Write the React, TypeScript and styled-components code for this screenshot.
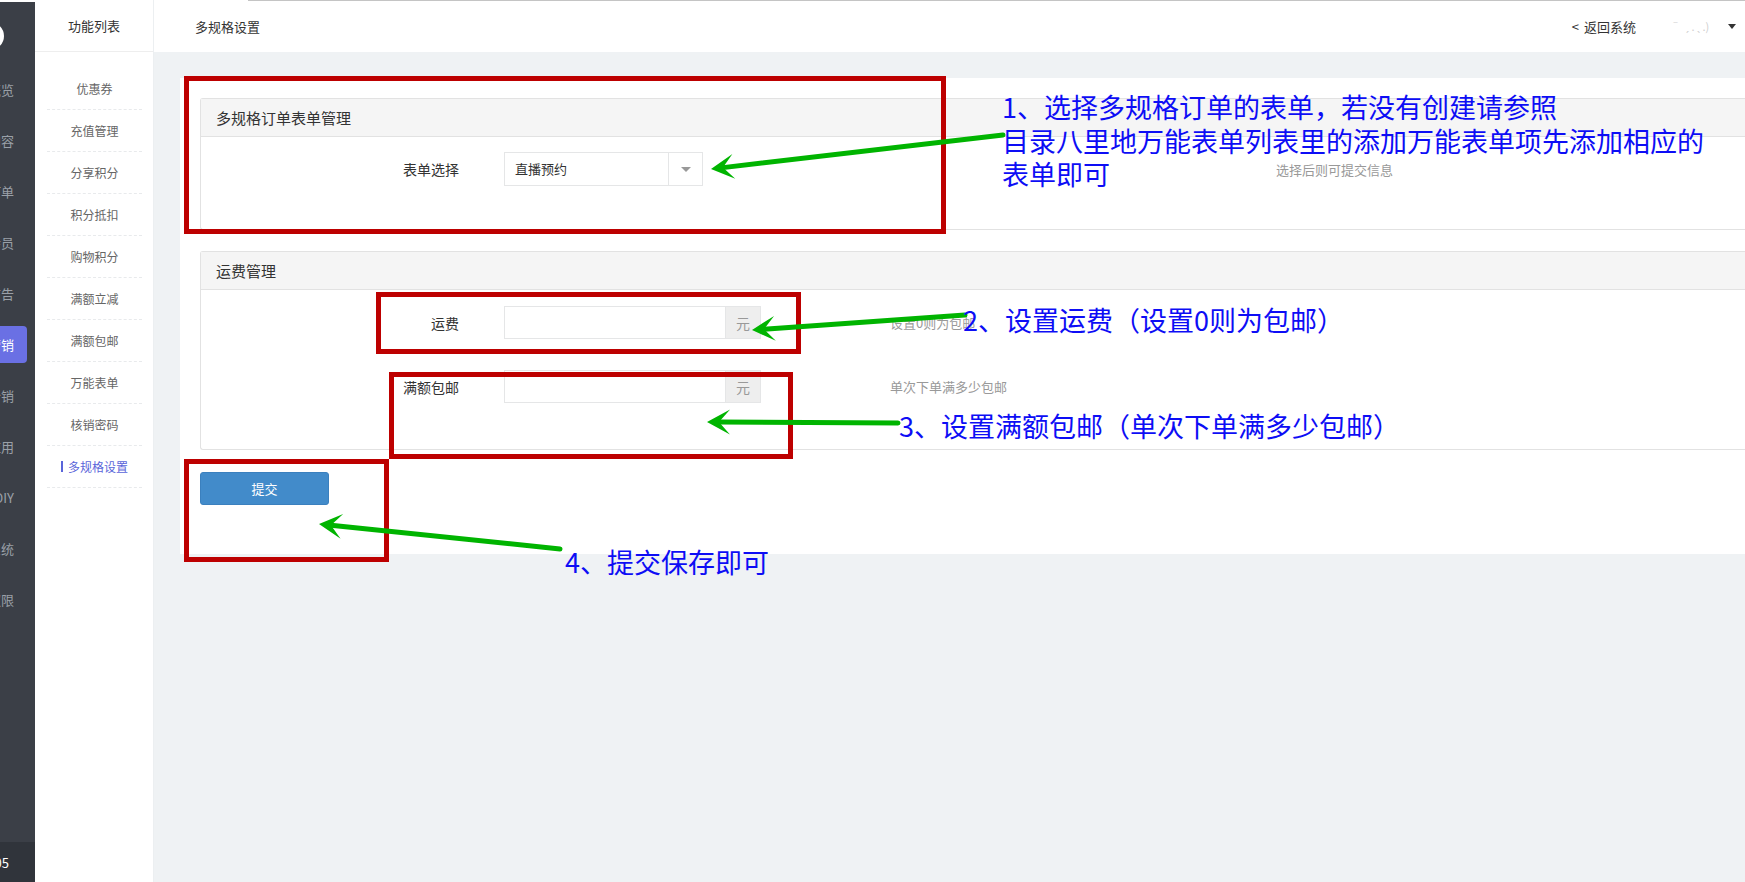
import { createGlobalStyle, styled } from "styled-components";

const GlobalStyle = createGlobalStyle`
    html, body { margin: 0; padding: 0; }
    body {
        font-family: "Noto Sans CJK SC", "Noto Sans", sans-serif;
        color: #333;
        background: #fff;
    }
    * { box-sizing: border-box; }
`;

const mainMenu = ["概览", "内容", "订单", "会员", "广告", "营销", "分销", "应用", "DIY", "系统", "权限"];
const subMenu = ["优惠券", "充值管理", "分享积分", "积分抵扣", "购物积分", "满额立减", "满额包邮", "万能表单", "核销密码", "多规格设置"];

type Arrow = { from: [number, number]; tip: [number, number] };

const arrows: Array<Arrow> = [
    { from: [1003, 135], tip: [711, 169] },
    { from: [965, 315], tip: [752, 330] },
    { from: [898, 423], tip: [707, 422] },
    { from: [560, 549], tip: [319, 524] },
];

const boxes = [
    { x: 184, y: 76, w: 762, h: 158 },
    { x: 376, y: 292, w: 425, h: 62 },
    { x: 389, y: 372, w: 404, h: 87 },
    { x: 184, y: 459, w: 205, h: 103 },
];

function arrowParts({ from, tip }: Arrow) {
    const dx = from[0] - tip[0];
    const dy = from[1] - tip[1];
    const len = Math.hypot(dx, dy);
    const ux = dx / len, uy = dy / len;
    const nx = -uy, ny = ux;
    const L = 23, W = 12.5, N = 12;
    const b1 = [tip[0] + ux * L + nx * W, tip[1] + uy * L + ny * W];
    const b2 = [tip[0] + ux * L - nx * W, tip[1] + uy * L - ny * W];
    const notch = [tip[0] + ux * N, tip[1] + uy * N];
    const head = `M${tip[0]},${tip[1]} L${b1[0]},${b1[1]} L${notch[0]},${notch[1]} L${b2[0]},${b2[1]} Z`;
    return { head, notch };
}

export default function App() {
    return (
        <Page>
            <GlobalStyle />
            <MainNav>
                <Logo><LogoMark /></Logo>
                {mainMenu.map((label) => (
                    <MainItem key={label}>
                        <MainLabel $active={label === "营销"}>{label}</MainLabel>
                    </MainItem>
                ))}
                <Version><span>v1.05</span></Version>
            </MainNav>

            <SubNav>
                <SubHeader>功能列表</SubHeader>
                <SubList>
                    {subMenu.map((label) => (
                        <SubItem key={label} $active={label === "多规格设置"}>{label}</SubItem>
                    ))}
                </SubList>
            </SubNav>

            <Main>
                <TopBar>
                    <span>多规格设置</span>
                    <TopRight>
                        <BackLink><BackArrow>&lt;</BackArrow>返回系统</BackLink>
                        <UserName>ˉ &nbsp;ˏ . ˎ .)</UserName>
                        <Caret />
                    </TopRight>
                </TopBar>

                <Content>
                    <Card>
                        <Panel>
                            <PanelHeader>多规格订单表单管理</PanelHeader>
                            <PanelBody $top={15} $bottom={43}>
                                <FormRow>
                                    <Label>表单选择</Label>
                                    <Control $w={772}>
                                        <Select>
                                            <SelectText>直播预约</SelectText>
                                            <SelectToggle><Triangle /></SelectToggle>
                                        </Select>
                                    </Control>
                                    <Help>选择后则可提交信息</Help>
                                </FormRow>
                            </PanelBody>
                        </Panel>

                        <Panel>
                            <PanelHeader>运费管理</PanelHeader>
                            <PanelBody $top={16} $bottom={46}>
                                <FormRow>
                                    <Label>运费</Label>
                                    <Control $w={386}>
                                        <InputGroup>
                                            <Input />
                                            <Addon>元</Addon>
                                        </InputGroup>
                                    </Control>
                                    <Help>设置0则为包邮</Help>
                                </FormRow>
                                <FormRow>
                                    <Label>满额包邮</Label>
                                    <Control $w={386}>
                                        <InputGroup>
                                            <Input />
                                            <Addon>元</Addon>
                                        </InputGroup>
                                    </Control>
                                    <Help>单次下单满多少包邮</Help>
                                </FormRow>
                            </PanelBody>
                        </Panel>

                        <SubmitButton>提交</SubmitButton>
                    </Card>
                </Content>
            </Main>

            <Overlay>
                {boxes.map((b, i) => (
                    <RedBox key={i} $x={b.x} $y={b.y} $w={b.w} $h={b.h} />
                ))}
                <ArrowLayer width="1745" height="882" viewBox="0 0 1745 882">
                    {arrows.map((a, i) => {
                        const { head, notch } = arrowParts(a);
                        return (
                            <g key={i}>
                                <line x1={a.from[0]} y1={a.from[1]} x2={notch[0]} y2={notch[1]}
                                    stroke="#00b400" strokeWidth="5" strokeLinecap="round" />
                                <path d={head} fill="#00b400" />
                            </g>
                        );
                    })}
                </ArrowLayer>
                <Note $x={1002} $y={90}>
                    1、选择多规格订单的表单，若没有创建请参照<br />
                    目录八里地万能表单列表里的添加万能表单项先添加相应的<br />
                    表单即可
                </Note>
                <Note $x={963} $y={303}>2、设置运费（设置0则为包邮）</Note>
                <Note $x={899} $y={409}>3、设置满额包邮（单次下单满多少包邮）</Note>
                <Note $x={565} $y={545}>4、提交保存即可</Note>
            </Overlay>
        </Page>
    );
}

const Page = styled.div`
    position: relative;
    display: flex;
    width: 100vw;
    height: 100vh;
    overflow: hidden;
`;

const MainNav = styled.nav`
    width: 35px;
    flex-shrink: 0;
    background: #3b3f47;
    display: flex;
    flex-direction: column;
    overflow: hidden;
`;

const Logo = styled.div`
    height: 64px;
    border-top: 2px solid #fff;
    padding-top: 20px;
`;

const LogoMark = styled.div`
    width: 28px;
    height: 28px;
    margin-left: -24px;
    border-radius: 50%;
    border: 5px solid #fff;
`;

const MainItem = styled.div`
    height: 51px;
    display: flex;
    align-items: center;
    justify-content: flex-end;
    padding-right: 8px;
`;

const MainLabel = styled.span<{ $active?: boolean }>`
    height: 37px;
    line-height: 37px;
    padding: 0 13px 0 30px;
    border-radius: 0 4px 4px 0;
    white-space: nowrap;
    font-size: 13px;
    background: ${(p) => (p.$active ? "#6a70e4" : "transparent")};
    color: ${(p) => (p.$active ? "#fff" : "#9aa0a8")};
`;

const Version = styled.div`
    margin-top: auto;
    height: 40px;
    flex-shrink: 0;
    display: flex;
    align-items: center;
    justify-content: flex-end;
    background: #30343b;
    color: #fff;
    font-size: 13px;
    padding-right: 26px;
    white-space: nowrap;
`;

const SubNav = styled.aside`
    width: 119px;
    flex-shrink: 0;
    border-right: 1px solid #eceff1;
    background: #fff;
`;

const SubHeader = styled.div`
    height: 52px;
    line-height: 51px;
    border-bottom: 1px solid #eee;
    text-align: center;
    font-size: 13px;
    color: #333;
`;

const SubList = styled.ul`
    list-style: none;
    margin: 0;
    padding: 16px 11px 0 12px;
`;

const SubItem = styled.li<{ $active?: boolean }>`
    height: 42px;
    display: flex;
    align-items: center;
    justify-content: center;
    gap: 5px;
    border-bottom: 1px dashed #e8eaec;
    font-size: 12px;
    color: ${(p) => (p.$active ? "#5a65da" : "#666")};
    &::before {
        content: "";
        display: ${(p) => (p.$active ? "block" : "none")};
        width: 2px;
        height: 11px;
        background: #5a65da;
    }
`;

const Main = styled.main`
    flex: 1;
    display: flex;
    flex-direction: column;
    min-width: 0;
`;

const TopBar = styled.header`
    position: relative;
    height: 52px;
    flex-shrink: 0;
    display: flex;
    align-items: center;
    justify-content: space-between;
    padding: 0 9px 0 41px;
    font-size: 13px;
    color: #333;
    background: #fff;
    &::before {
        content: "";
        position: absolute;
        top: 0;
        left: 94px;
        right: 0;
        height: 1px;
        background: #c4c4c4;
    }
`;

const TopRight = styled.div`
    display: flex;
    align-items: center;
`;

const BackLink = styled.span`
    display: flex;
    align-items: center;
    font-size: 13px;
    color: #333;
    margin-right: 34px;
`;

const BackArrow = styled.span`
    margin-right: 5px;
`;

const UserName = styled.span`
    font-size: 11px;
    color: #cfcfcf;
    width: 58px;
    white-space: nowrap;
`;

const Caret = styled.span`
    width: 0;
    height: 0;
    border-left: 4px solid transparent;
    border-right: 4px solid transparent;
    border-top: 5px solid #333;
`;

const Content = styled.div`
    flex: 1;
    background: #eff2f4;
    padding: 26px 0 0 26px;
`;

const Card = styled.section`
    background: #fff;
    padding: 20px 0 49px 20px;
`;

const Panel = styled.div`
    border: 1px solid #e2e2e2;
    border-right: none;
    border-radius: 3px 0 0 3px;
    margin-bottom: 21px;
    & + & { margin-bottom: 22px; }
`;

const PanelHeader = styled.div`
    height: 38px;
    line-height: 37px;
    padding-left: 15px;
    background: #f5f5f5;
    border-bottom: 1px solid #e2e2e2;
    font-size: 15px;
    color: #333;
`;

const PanelBody = styled.div<{ $top: number; $bottom: number }>`
    display: flex;
    flex-direction: column;
    gap: 31px;
    padding: ${(p) => p.$top}px 0 ${(p) => p.$bottom}px;
`;

const FormRow = styled.div`
    display: flex;
    align-items: center;
`;

const Label = styled.label`
    width: 258px;
    text-align: right;
    font-size: 14px;
    color: #333;
`;

const Control = styled.div<{ $w: number }>`
    width: ${(p) => p.$w}px;
    margin-left: 45px;
`;

const Help = styled.span`
    font-size: 13px;
    color: #999;
`;

const Select = styled.div`
    width: 199px;
    height: 34px;
    display: flex;
    border: 1px solid #e5e6e7;
`;

const SelectText = styled.span`
    flex: 1;
    line-height: 32px;
    padding-left: 10px;
    font-size: 13px;
    color: #333;
`;

const SelectToggle = styled.span`
    width: 34px;
    display: flex;
    align-items: center;
    justify-content: center;
    border-left: 1px solid #e5e6e7;
`;

const Triangle = styled.span`
    width: 0;
    height: 0;
    border-left: 5px solid transparent;
    border-right: 5px solid transparent;
    border-top: 5px solid #999;
`;

const InputGroup = styled.div`
    width: 257px;
    height: 33px;
    display: flex;
`;

const Input = styled.input`
    flex: 1;
    min-width: 0;
    border: 1px solid #e5e6e7;
    border-right: none;
    outline: none;
    padding: 0 8px;
    font-size: 13px;
`;

const Addon = styled.span`
    width: 36px;
    display: flex;
    align-items: center;
    justify-content: center;
    background: #eee;
    border: 1px solid #e5e6e7;
    color: #999;
    font-size: 14px;
`;

const SubmitButton = styled.button`
    width: 129px;
    height: 33px;
    border: 1px solid #3b80be;
    border-radius: 3px;
    background: #428bca;
    color: #fff;
    font-family: inherit;
    font-size: 13px;
    cursor: pointer;
`;

const Overlay = styled.div`
    position: absolute;
    inset: 0;
    pointer-events: none;
`;

const ArrowLayer = styled.svg`
    position: absolute;
    left: 0;
    top: 0;
`;

const RedBox = styled.div<{ $x: number; $y: number; $w: number; $h: number }>`
    position: absolute;
    left: ${(p) => p.$x}px;
    top: ${(p) => p.$y}px;
    width: ${(p) => p.$w}px;
    height: ${(p) => p.$h}px;
    border: 5px solid #bd0000;
`;

const Note = styled.div<{ $x: number; $y: number }>`
    position: absolute;
    left: ${(p) => p.$x}px;
    top: ${(p) => p.$y}px;
    font-size: 27px;
    line-height: 33.5px;
    color: #0d0df5;
    white-space: nowrap;
`;
